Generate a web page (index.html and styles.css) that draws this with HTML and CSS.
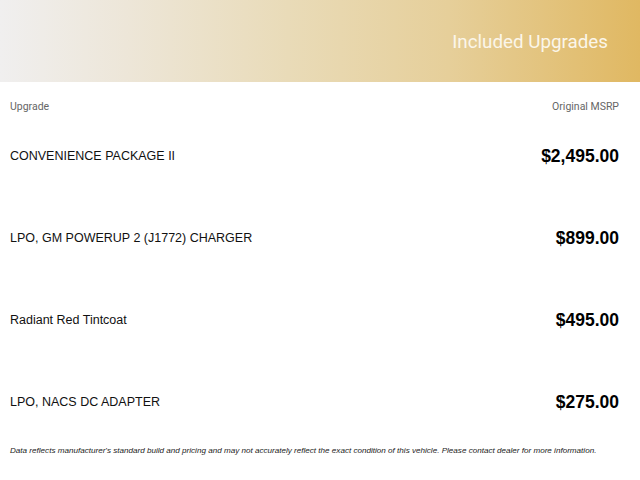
FILE: index.html
```html
<!DOCTYPE html>
<html>
<head>
<meta charset="utf-8">
<link rel="stylesheet" href="styles.css">
</head>
<body>
<header class="banner">
  <h1 class="banner-title">Included Upgrades</h1>
</header>
<main class="content">
  <div class="thead">
    <span>Upgrade</span>
    <span>Original MSRP</span>
  </div>
  <div class="rows">
    <div class="row"><span class="item">CONVENIENCE PACKAGE II</span><span class="price">$2,495.00</span></div>
    <div class="row"><span class="item">LPO, GM POWERUP 2 (J1772) CHARGER</span><span class="price">$899.00</span></div>
    <div class="row"><span class="item">Radiant Red Tintcoat</span><span class="price">$495.00</span></div>
    <div class="row"><span class="item">LPO, NACS DC ADAPTER</span><span class="price">$275.00</span></div>
  </div>
  <p class="note">Data reflects manufacturer's standard build and pricing and may not accurately reflect the exact condition of this vehicle. Please contact dealer for more information.</p>
</main>
</body>
</html>
```
FILE: styles.css
```css
html, body {
  margin: 0;
  padding: 0;
  background: #ffffff;
}
body {
  width: 640px;
  height: 480px;
  overflow: hidden;
  font-family: "Liberation Sans", Arial, sans-serif;
  color: #111111;
}
.banner {
  height: 82px;
  display: flex;
  align-items: center;
  justify-content: flex-end;
  padding-right: 32px;
  background: linear-gradient(90deg, #f0efef 0%, #ede6d8 20%, #e9dbb8 45%, #e6cf9a 70%, #e0b862 100%);
}
.banner-title {
  margin: 0;
  font-family: Roboto, "Liberation Sans", sans-serif;
  font-weight: 400;
  font-size: 18.8px;
  line-height: 22px;
  color: #fbf6ea;
  position: relative;
  top: 1px;
}
.content {
  padding: 0 21px 0 10px;
}
.thead {
  display: flex;
  justify-content: space-between;
  padding-top: 18px;
  font-family: Roboto, "Liberation Sans", sans-serif;
  font-size: 10.5px;
  line-height: 13px;
  color: #666666;
}
.rows {
  display: flex;
  flex-direction: column;
  gap: 60px;
  padding-top: 32px;
}
.row {
  display: flex;
  justify-content: space-between;
  align-items: center;
  height: 22px;
}
.item {
  font-size: 12.5px;
  color: #111111;
}
.price {
  font-size: 17.5px;
  font-weight: 700;
  color: #000000;
}
.note {
  margin: 32px 0 0;
  font-size: 8.1px;
  line-height: 11px;
  font-style: italic;
  color: #222222;
  white-space: nowrap;
}
```
